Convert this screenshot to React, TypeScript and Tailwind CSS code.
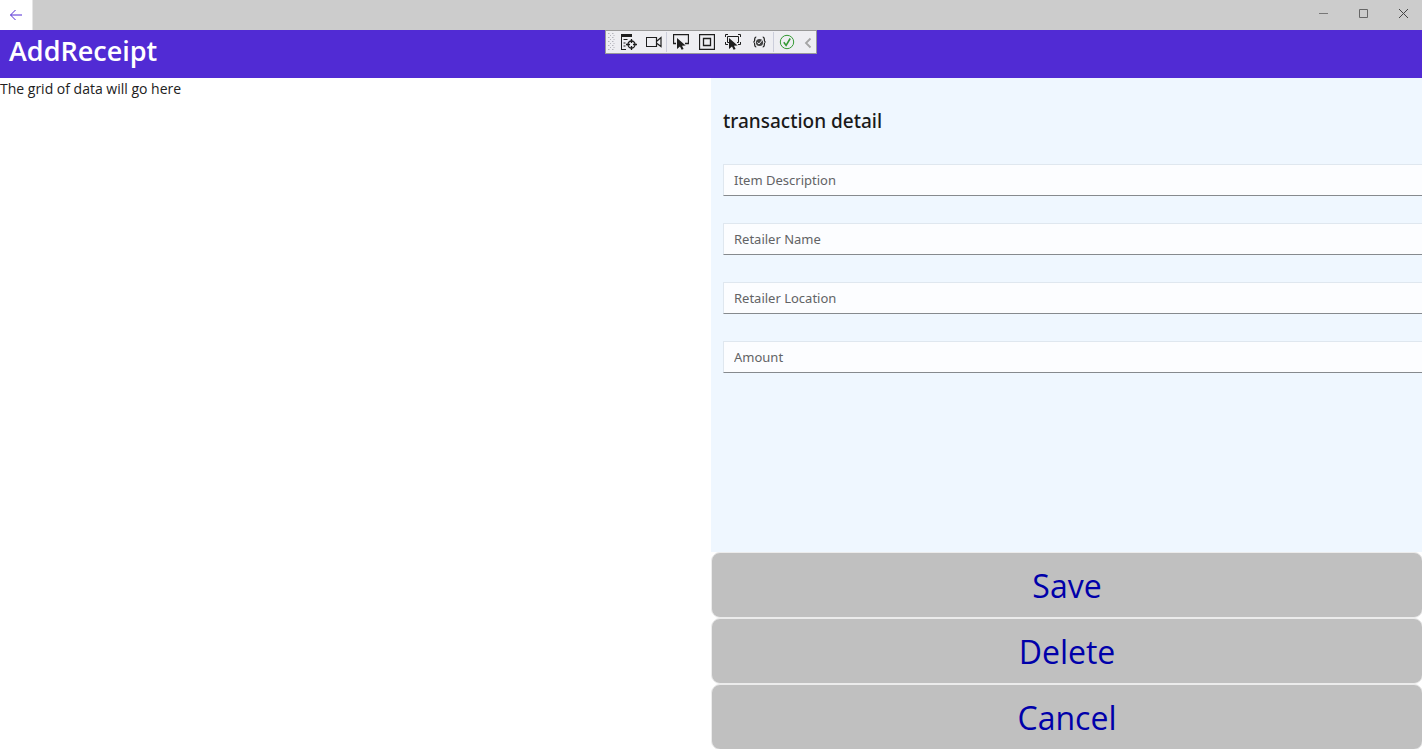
import type { ReactNode } from "react";

const fields = ["Item Description", "Retailer Name", "Retailer Location", "Amount"];
const actions = ["Save", "Delete", "Cancel"];

function ToolButton({ label, width = "w-[26px]", children }: { label: string; width?: string; children: ReactNode }) {
  return (
    <button type="button" aria-label={label} className={`flex h-full items-center justify-center ${width}`}>
      {children}
    </button>
  );
}

function Icon({ children, color = "#1e1e1e" }: { children: ReactNode; color?: string }) {
  return (
    <svg width="16" height="16" viewBox="0 0 16 16" fill="none" stroke={color} className="shrink-0">
      {children}
    </svg>
  );
}

const cursor = "M4 4v11l3-2.6 1.6 3.4 2-.9L9 11.7l3.6-.3z";

function DebugToolbar() {
  return (
    <div
      role="toolbar"
      aria-label="Debug toolbar"
      className="absolute top-[30px] left-1/2 flex h-6 w-[212px] -translate-x-1/2 items-center border border-[#999999] bg-[#eeeef2]"
    >
      <svg width="10" height="18" viewBox="0 0 10 18" fill="#b4b4bc" className="shrink-0">
        {[0, 4, 8, 12, 16].map((y) => (
          <path key={y} d={`M2 ${y}h1.500v1h-1.500zM6 ${y}h1.500v1h-1.500zM4 ${y + 2}h1v1h-1zM7.500 ${y + 2}h1v1h-1z`} />
        ))}
      </svg>
      <ToolButton label="Live visual tree">
        <Icon>
          <path d="M0 1.500h11" strokeWidth="3" />
          <path d="M.5 2v13.500M0 15.500h5M2.500 5.500h4M2.500 9h2M2.500 12h2" />
          <circle cx="10.500" cy="10.500" r="3.500" strokeWidth="1.300" />
          <path d="M10.500 5v4M10.500 12v4M5 10.500h4M12 10.500h4" strokeWidth="1.300" />
        </Icon>
      </ToolButton>
      <ToolButton label="Record" width="w-6">
        <Icon>
          <path d="M-.5 3.500h11v9h-11zM11 7l4-3.500v9L11 9.500" strokeWidth="1.200" />
          <path d="M.5 3v10" />
        </Icon>
      </ToolButton>
      <span className="mr-px h-5 w-px bg-[#cccedb]" />
      <ToolButton label="Select element">
        <Icon>
          <path d="M3 9.500H.5v-9h15v9H12" strokeWidth="1.300" />
          <path d={cursor} fill="#1e1e1e" stroke="none" />
        </Icon>
      </ToolButton>
      <ToolButton label="Display layout adorners">
        <Icon>
          <path d="M.5.5h15v15H.5zM4.500 4.500h7v7h-7z" strokeWidth="1.300" />
        </Icon>
      </ToolButton>
      <ToolButton label="Track focused element">
        <Icon>
          <path d="M.5 3V.5H3M13 .5h2.500V3M15.500 8v2.500H13M3 10.500H.5V8M4 8.500H2.500v-6h11v6H12" />
          <path d={cursor} fill="#1e1e1e" stroke="none" />
        </Icon>
      </ToolButton>
      <ToolButton label="Binding failures" width="w-[27px]">
        <Icon>
          <path d="M4.300 3c-2 0-1.500 2-1.700 3.500S1.300 8 1.300 8s1.100 0 1.300 1.500-.3 3.500 1.700 3.500M10.700 3c2 0 1.500 2 1.700 3.500S13.700 8 13.700 8s-1.100 0-1.300 1.500.3 3.500-1.700 3.500" strokeWidth="1.200" />
          <circle cx="7.500" cy="8.500" r="3.600" fill="#424242" stroke="none" />
          <path d="M5.300 8.500L7 10l3.800-4.500" stroke="#eeeef2" />
        </Icon>
      </ToolButton>
      <span className="h-5 w-px bg-[#cccedb]" />
      <ToolButton label="Hot reload">
        <Icon color="#339933">
          <circle cx="8" cy="8" r="6.700" />
          <path d="M4.800 8.200l2.300 3.200L11.200 4.500" strokeWidth="1.600" />
        </Icon>
      </ToolButton>
      <ToolButton label="Collapse toolbar" width="w-4">
        <Icon color="#a5a5a5">
          <path d="M10.500 4.500l-4.500 4.500 4.500 4.500" strokeWidth="1.800" />
        </Icon>
      </ToolButton>
    </div>
  );
}

function TitleBar() {
  return (
    <div className="flex h-[30px] shrink-0 justify-between bg-[#cccccc]">
      <button type="button" aria-label="Back" className="flex w-[33px] items-center justify-center border-r border-[#e5e5e5] bg-white">
        <svg width="14" height="14" viewBox="0 0 14 14" className="fill-none stroke-[#512bd4]">
          <path d="M13 7H1.500M6.500 2l-5 5 5 5" />
        </svg>
      </button>
      <div className="-mr-px flex pb-[3px]">
        <button type="button" aria-label="Minimize" className="flex w-10 items-center justify-center">
          <svg width="9" height="9" viewBox="0 0 9 9" stroke="#777777"><path d="M0 4.500h9" /></svg>
        </button>
        <button type="button" aria-label="Maximize" className="flex w-10 items-center justify-center">
          <svg width="9" height="9" viewBox="0 0 9 9" fill="none" stroke="#666666"><path d="M.5.5h8v8h-8z" /></svg>
        </button>
        <button type="button" aria-label="Close" className="flex w-10 items-center justify-center">
          <svg width="9" height="9" viewBox="0 0 9 9" stroke="#444444"><path d="M0 0l9 9M9 0L0 9" /></svg>
        </button>
      </div>
    </div>
  );
}

export default function App() {
  return (
    <div className="relative flex h-screen flex-col overflow-hidden bg-white font-['Open_Sans',sans-serif] text-[#212121]">
      <TitleBar />
      <header className="h-12 shrink-0 bg-[#512bd4] px-[9px]">
        <h1 className="text-[27px] leading-[42px] font-semibold text-white">AddReceipt</h1>
      </header>
      <DebugToolbar />
      <main className="-mb-px grid min-h-0 flex-1 grid-cols-2">
        <section>
          <p className="text-sm leading-[22px]">The grid of data will go here</p>
        </section>
        <form className="-mr-px flex min-h-0 flex-col" onSubmit={(event) => event.preventDefault()}>
          <div className="flex-1 bg-[#eff7ff] pt-7 pl-3 font-['Noto_Sans',sans-serif]">
            <h2 className="mb-7 text-[19px] leading-[30px] font-medium text-[#1a1a1a]">transaction detail</h2>
            <div className="flex flex-col gap-[27px]">
              {fields.map((field) => (
                <input
                  key={field}
                  type="text"
                  aria-label={field}
                  placeholder={field}
                  className="h-8 w-full border-t border-b border-l border-t-[#dfe7ef] border-b-[#868a8e] border-l-[#dfe7ef] bg-[#fcfdff] px-[10px] text-[13px] outline-none placeholder:text-[#626365]"
                />
              ))}
            </div>
          </div>
          {actions.map((action) => (
            <button
              key={action}
              type="button"
              className="h-[66px] shrink-0 rounded-[9px] border border-[#ececec] bg-[#c0c0c0] pt-0.5 text-[32px] text-[#0000aa]"
            >
              {action}
            </button>
          ))}
        </form>
      </main>
    </div>
  );
}
